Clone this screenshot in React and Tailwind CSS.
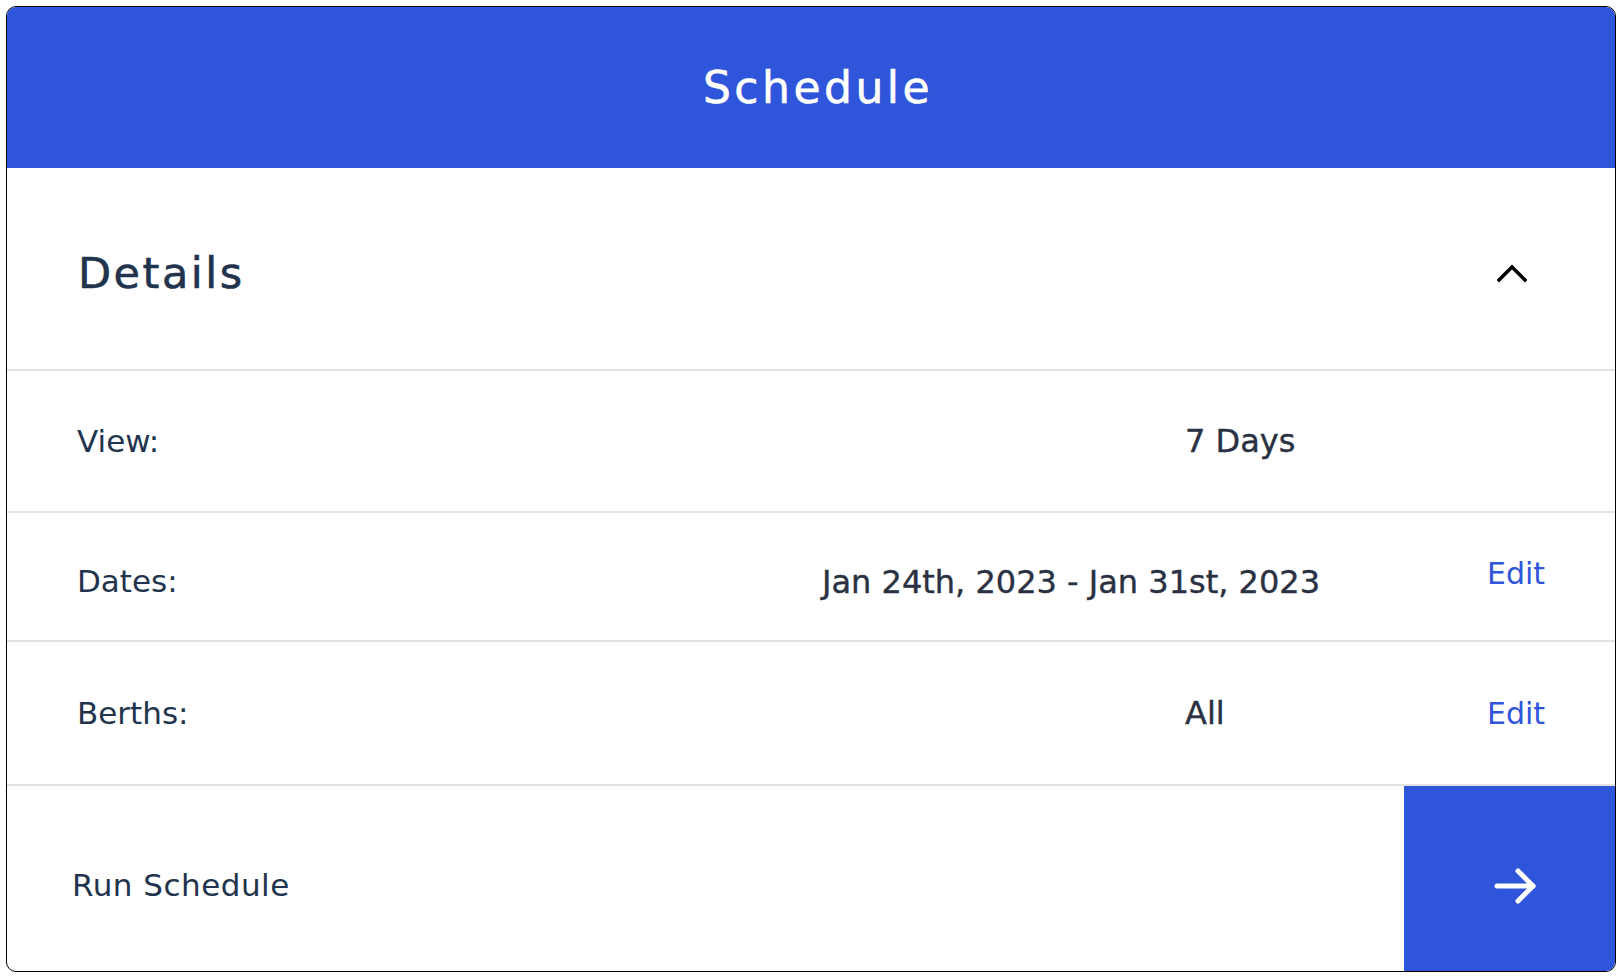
/* eslint-disable */
import React from 'react';

const font = { fontFamily: '"DejaVu Sans", "Liberation Sans", sans-serif' };

function ChevronUp() {
  return (
    <svg width="30" height="20" viewBox="0 0 30 20" fill="none">
      <polyline points="2,17 15,4 28,17" stroke="#000" strokeWidth="3.5" strokeLinecap="square" strokeLinejoin="miter" />
    </svg>
  );
}

function ArrowRight() {
  return (
    <svg width="44" height="38" viewBox="0 0 44 38" fill="none">
      <path d="M3 19H39" stroke="#fff" strokeWidth="5" strokeLinecap="round" />
      <path d="M24 4L39 19L24 34" stroke="#fff" strokeWidth="5" strokeLinecap="round" strokeLinejoin="round" />
    </svg>
  );
}

export default function App() {
  // rows of the details panel
  const rows = [
    { label: 'View:', value: '7 Days', edit: false, h: 'h-[142px]', valueClass: 'w-[302px]' },
    { label: 'Dates:', value: 'Jan 24th, 2023 - Jan 31st, 2023', edit: true, h: 'h-[129px]', valueClass: 'mr-[167px] pt-[10px]' },
    { label: 'Berths:', value: 'All', edit: true, h: 'h-[144px]', valueClass: 'w-[302px]' },
  ];

  return (
    <div className="min-h-screen bg-white p-[6px]" style={font}>
      <div className="flex h-[966px] flex-col overflow-hidden rounded-[10px] border border-black bg-white">
        <div className="flex h-[161px] items-center justify-center bg-[#2f55da] pl-[14px]">
          <h1 className="text-[44px] tracking-[3.5px] text-white [-webkit-text-stroke:0.6px_#ffffff]">Schedule</h1>
        </div>

        <div className="flex h-[203px] items-center justify-between border-b-2 border-[#e3e3e3] pl-[71px] pr-[88px]">
          <h2 className="pt-[10px] text-[43px] tracking-[2.5px] text-[#22344d] [-webkit-text-stroke:0.6px_#22344d]">Details</h2>
          <button className="pt-[8px]">
            <ChevronUp />
          </button>
        </div>

        {rows.map((row) => (
          <div key={row.label} className={`flex items-center border-b-2 border-[#e3e3e3] pl-[70px] pr-[70px] ${row.h}`}>
            <div className={`flex-1 text-[31px] text-[#22344d] ${row.label === 'Dates:' ? 'pt-[10px]' : ''}`}>{row.label}</div>
            <div className={`text-[32px] text-[#2a3142] [-webkit-text-stroke:0.4px_#2a3142] ${row.valueClass}`}>{row.value}</div>
            <div className="w-[58px] text-right">
              {row.edit && (
                <button className={`text-[30px] text-[#2f55da] ${row.label === 'Dates:' ? 'pb-[6px]' : ''}`}>Edit</button>
              )}
            </div>
          </div>
        ))}

        <div className="flex flex-1">
          <div className="flex flex-1 items-center pl-[65px] pt-[13px] text-[31px] tracking-[0.5px] text-[#22344d]">Run Schedule</div>
          <button className="flex w-[211px] items-center justify-center bg-[#2f55da] pl-[12px] pt-[14px]">
            <ArrowRight />
          </button>
        </div>
      </div>
    </div>
  );
}
